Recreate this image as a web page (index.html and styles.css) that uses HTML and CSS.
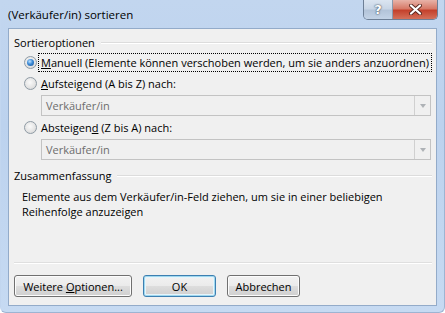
FILE: index.html
```html
<!DOCTYPE html>
<html lang="de">
<head>
  <meta charset="UTF-8">
  <title>(Verkäufer/in) sortieren</title>
  <link rel="stylesheet" href="styles.css">
</head>
<body>
<div class="window">
  <div class="titlebar">
    <span class="title">(Verkäufer/in) sortieren</span>
    <div class="caption-btns">
      <div class="cap help">?</div>
      <div class="cap close">
        <svg width="13" height="11" viewBox="0 0 13 11">
          <path d="M2 1.5 L11 9.5 M11 1.5 L2 9.5" stroke="#5a2a22" stroke-width="4" stroke-linecap="round"/>
          <path d="M2 1.5 L11 9.5 M11 1.5 L2 9.5" stroke="#fff" stroke-width="2.2" stroke-linecap="round"/>
        </svg>
      </div>
    </div>
  </div>
  <div class="panel">
    <div class="group-title">Sortieroptionen</div>
    <div class="option">
      <span class="radio checked"></span>
      <span class="label focus"><u>M</u>anuell (Elemente können verschoben werden, um sie anders anzuordnen)</span>
    </div>
    <div class="option">
      <span class="radio"></span>
      <span class="label"><u>A</u>ufsteigend (A bis Z) nach:</span>
    </div>
    <div class="combo">
      <span class="combo-text">Verkäufer/in</span>
      <span class="combo-btn"><span class="arrow"></span></span>
    </div>
    <div class="option">
      <span class="radio"></span>
      <span class="label">Absteigen<u>d</u> (Z bis A) nach:</span>
    </div>
    <div class="combo">
      <span class="combo-text">Verkäufer/in</span>
      <span class="combo-btn"><span class="arrow"></span></span>
    </div>
    <div class="group-title second">Zusammenfassung</div>
    <p class="summary">Elemente aus dem Verkäufer/in-Feld ziehen, um sie in einer beliebigen<br>Reihenfolge anzuzeigen</p>
    <div class="footer">
      <button class="btn wide">Weitere <u>O</u>ptionen...</button>
      <button class="btn default">OK</button>
      <button class="btn">Abbrechen</button>
    </div>
  </div>
</div>
</body>
</html>
```

FILE: styles.css
```css
* { margin: 0; padding: 0; box-sizing: border-box; }
body {
  width: 445px;
  height: 313px;
  background: #fff;
  font-family: "Open Sans", "Noto Sans", sans-serif;
  font-size: 11px;
  color: #000;
}
.window {
  width: 445px;
  height: 313px;
  display: flex;
  flex-direction: column;
  background: linear-gradient(180deg, #c2d6ef 0%, #bcd2ee 40%, #c6daf2 100%);
  border: 1px solid #9db4d2;
  border-top: none;
  border-left-color: #c2d6ef;
  border-radius: 0 0 6px 6px;
}
.titlebar {
  height: 28px;
  display: flex;
  align-items: flex-start;
  padding-left: 7px;
}
.title {
  margin-top: 7px;
  line-height: 16px;
  font-size: 11.5px;
}
.caption-btns {
  margin-left: auto;
  margin-right: 6px;
  display: flex;
  height: 20px;
  border: 1px solid #6d7f96;
  border-top: none;
  border-radius: 0 0 5px 5px;
  overflow: hidden;
}
.cap {
  height: 19px;
  display: flex;
  align-items: center;
  justify-content: center;
}
.help {
  width: 29px;
  background: linear-gradient(180deg, #dbe5f1 0%, #c9d6e6 45%, #b3c4d9 55%, #c3d3e6 100%);
  border-right: 1px solid #8a99ac;
  color: #fff;
  font-family: "DejaVu Sans", sans-serif;
  font-weight: bold;
  font-size: 13px;
  text-shadow: 0 0 2px #3c4a5c, 0 0 1px #3c4a5c;
}
.close {
  width: 44px;
  background: linear-gradient(180deg, #e8b3a8 0%, #d77a68 45%, #c4412c 55%, #d4705a 100%);
}
.panel {
  flex: 1;
  margin: 0 7px 6px 7px;
  border: 1px solid #93abc9;
  background: #f0f0f0;
  padding: 6px 4px 8px 5px;
  display: flex;
  flex-direction: column;
}
.group-title {
  display: flex;
  align-items: center;
  height: 16px;
  line-height: 16px;
}
.group-title::after {
  content: "";
  flex: 1;
  margin-left: 6px;
  height: 1px;
  background: #dcdcdc;
  border-bottom: 1px solid #fff;
  box-sizing: content-box;
}
.group-title.second { margin-top: 8px; }
.option {
  display: flex;
  align-items: center;
  height: 19px;
  margin-top: 2px;
  padding-left: 10px;
  white-space: nowrap;
}
.radio {
  width: 13px;
  height: 13px;
  flex: none;
  border-radius: 50%;
  border: 1px solid #8f9ba5;
  background: radial-gradient(circle at 45% 40%, #fafafa 0%, #e3e3e3 60%, #cfcfcf 100%);
  margin-right: 1px;
  display: flex;
  align-items: center;
  justify-content: center;
}
.radio.checked::after {
  content: "";
  width: 7px;
  height: 7px;
  border-radius: 50%;
  background: radial-gradient(circle at 40% 35%, #bfe2ff 0%, #3b8ad6 45%, #1a4f8f 100%);
}
.label {
  padding: 1px 2px;
  border: 1px dotted transparent;
  line-height: 15px;
}
.label.focus { border-color: #000; flex: 1; margin-right: 1px; }
.combo {
  margin: 2px 1px 0 27px;
  height: 21px;
  border: 1px solid #c3c3c3;
  display: flex;
  align-items: center;
  background: #f0f0f0;
}
.combo-text {
  flex: 1;
  padding-left: 4px;
  color: #6d6d6d;
}
.combo-btn {
  width: 16px;
  height: 19px;
  border-left: 1px solid #d0d0d0;
  display: flex;
  align-items: center;
  justify-content: center;
}
.arrow {
  width: 0;
  height: 0;
  border-left: 3.5px solid transparent;
  border-right: 3.5px solid transparent;
  border-top: 4px solid #aeb2b6;
}
.summary {
  margin-top: 5px;
  padding-left: 8px;
  line-height: 15px;
}
.footer {
  margin-top: auto;
  border-top: 1px solid #dfdfdf;
  box-shadow: inset 0 1px 0 #fff;
  padding-top: 12px;
  display: flex;
  gap: 11px;
}
.btn {
  height: 22px;
  width: 73px;
  font-family: inherit;
  font-size: 11px;
  color: #000;
  border: 1px solid #707070;
  border-radius: 3px;
  background: linear-gradient(180deg, #f2f2f2 0%, #ebebeb 48%, #dddddd 52%, #cfcfcf 100%);
  box-shadow: inset 0 0 0 1px #fcfcfc;
}
.btn.wide { width: 118px; }
.btn.default {
  border-color: #3c7fb1;
  box-shadow: inset 0 0 0 1px #9fd8ef, inset 0 0 0 2px #e6f4fb;
}
```
